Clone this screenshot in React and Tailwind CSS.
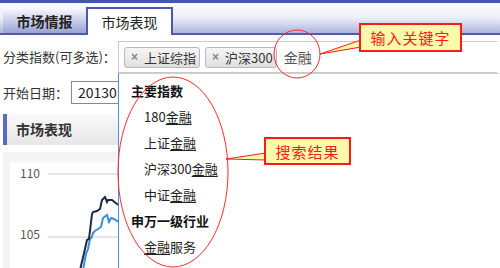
import React from 'react';

const font = { fontFamily: '"Noto Sans CJK SC", "Noto Sans", sans-serif' };

const Chip = ({ label }) => (
  <div className="flex h-[21px] shrink-0 items-center gap-[6px] whitespace-nowrap rounded-[3px] border border-[#b8b8b8] bg-gradient-to-b from-[#f6f6f6] to-[#e0e0e0] pl-[6px] pr-[3px] text-[13px] leading-none text-[#333]">
    <span className="font-['Liberation_Sans',sans-serif] text-[12px] font-bold text-[#888]">×</span>
    <span>{label}</span>
  </div>
);

const Item = ({ pre = '', post = '' }) => (
  <div className="pl-[13px] text-[13px] leading-none text-[#222]">
    {pre}
    <span className="underline underline-offset-2">金融</span>
    {post}
  </div>
);

const Callout = ({ text, className }) => (
  <div className={`absolute flex items-center justify-center border-2 border-[#ff1a1a] bg-[#fbfaa8] text-[15px] leading-none tracking-[1px] text-[#ff1a1a] ${className}`}>
    {text}
  </div>
);

const App = () => {
  return (
    <div className="relative h-[268px] w-[500px] overflow-hidden bg-white" style={font}>
      {/* header with tabs */}
      <div className="flex h-[35px] items-end border-t-[3px] border-b-2 border-t-[#4555ad] border-b-[#4e5cb0] bg-gradient-to-b from-[#fcfcff] via-[#eceef8] to-[#aeb4dc] pl-[3px]">
        <div className="flex h-[24px] w-[83px] items-center justify-center bg-gradient-to-b from-[#f6f6fb] to-[#9aa2d6] text-[14px] font-bold text-[#222]">
          市场情报
        </div>
        <div className="mb-[-2px] flex h-[28px] w-[87px] items-center justify-center border-x-2 border-t-2 border-[#4a58b0] bg-white text-[14px] text-[#222]">
          市场表现
        </div>
      </div>

      <div className="px-[3px]">
        {/* row 1 */}
        <div className="mt-[6px] flex items-stretch">
          <div className="flex w-[115px] shrink-0 items-center text-[13px] text-[#333]">分类指数(可多选)：</div>
          <div className="flex h-[32px] flex-1 items-center gap-[5px] border border-r-0 border-[#c8c8c8] pl-[5px]">
            <Chip label="上证综指" />
            <Chip label="沪深300" />
            <span className="ml-[2px] text-[14px] text-[#555]">金融</span>
          </div>
        </div>

        {/* row 2 */}
        <div className="mt-[8px] flex items-center">
          <div className="w-[68px] shrink-0 text-[13px] text-[#333]">开始日期：</div>
          <div className="flex h-[23px] w-[80px] items-center whitespace-nowrap border border-[#888] pl-[6px] text-[14px] text-[#222]">20130101</div>
        </div>

        {/* section header */}
        <div className="mt-[10px] flex h-[31px] items-center border-l-4 border-[#5a6cc0] bg-gradient-to-b from-[#fafafa] to-[#e6e6e6] pl-[9px] text-[14px] font-bold text-[#333]">
          市场表现
        </div>

        {/* chart */}
        <div className="mt-[7px] h-[120px] bg-[#f4f4f4] pl-[7px] pt-[10px]">
          <div className="relative h-full bg-white">
            <svg width="120" height="110" className="absolute left-0 top-0">
              <text x="10" y="16" fontSize="12" fill="#555" style={font}>110</text>
              <text x="10" y="77" fontSize="12" fill="#555" style={font}>105</text>
              <line x1="38" y1="12" x2="120" y2="12" stroke="#ccc" />
              <line x1="38" y1="75" x2="120" y2="75" stroke="#ccc" />
              <polyline
                points="70,101 73,85 75,80 77,70 79,68 80,64 82,62 85,60 88,58 90,49 94,46 96,53 98,49 101,50 107,54 110,56"
                fill="none" stroke="#3b8de0" strokeWidth="2" transform="translate(3,7)" />
              <polyline
                points="70,101 75,80 77,71 79,70 82,45 83,43 87,42 90,40 92,31 95,28 97,33 98,31 102,31 107,35 110,37"
                fill="none" stroke="#1c2a44" strokeWidth="2" transform="translate(0,7)" />
            </svg>
          </div>
        </div>
      </div>

      {/* dropdown */}
      <div className="absolute bottom-0 left-[118px] right-0 top-[73px] flex flex-col gap-[13px] border-l border-t border-l-[#4a90e2] border-t-[#d0d0d0] bg-white pl-[12px] pt-[10px]">
        <div className="text-[13px] font-bold leading-none text-[#111]">主要指数</div>
        <Item pre="180" />
        <Item pre="上证" />
        <Item pre="沪深300" />
        <Item pre="中证" />
        <div className="text-[13px] font-bold leading-none text-[#111]">申万一级行业</div>
        <Item post="服务" />
      </div>

      {/* annotations */}
      <svg width="500" height="268" className="pointer-events-none absolute left-0 top-0">
        <ellipse cx="297" cy="54" rx="23" ry="24" fill="none" stroke="#ff2a2a" strokeWidth="1" />
        <polygon points="320,54 361,40 361,47" fill="#fbfaa8" stroke="#ff1a1a" strokeWidth="1" />
        <ellipse cx="173" cy="172" rx="55" ry="95" fill="none" stroke="#ff2a2a" strokeWidth="1" />
        <polygon points="226,159 266,153 266,160" fill="#fbfaa8" stroke="#ff1a1a" strokeWidth="1" />
      </svg>
      <Callout text="输入关键字" className="left-[359px] top-[23px] h-[29px] w-[103px]" />
      <Callout text="搜索结果" className="left-[264px] top-[137px] h-[28px] w-[87px]" />
    </div>
  );
};

export default App;
